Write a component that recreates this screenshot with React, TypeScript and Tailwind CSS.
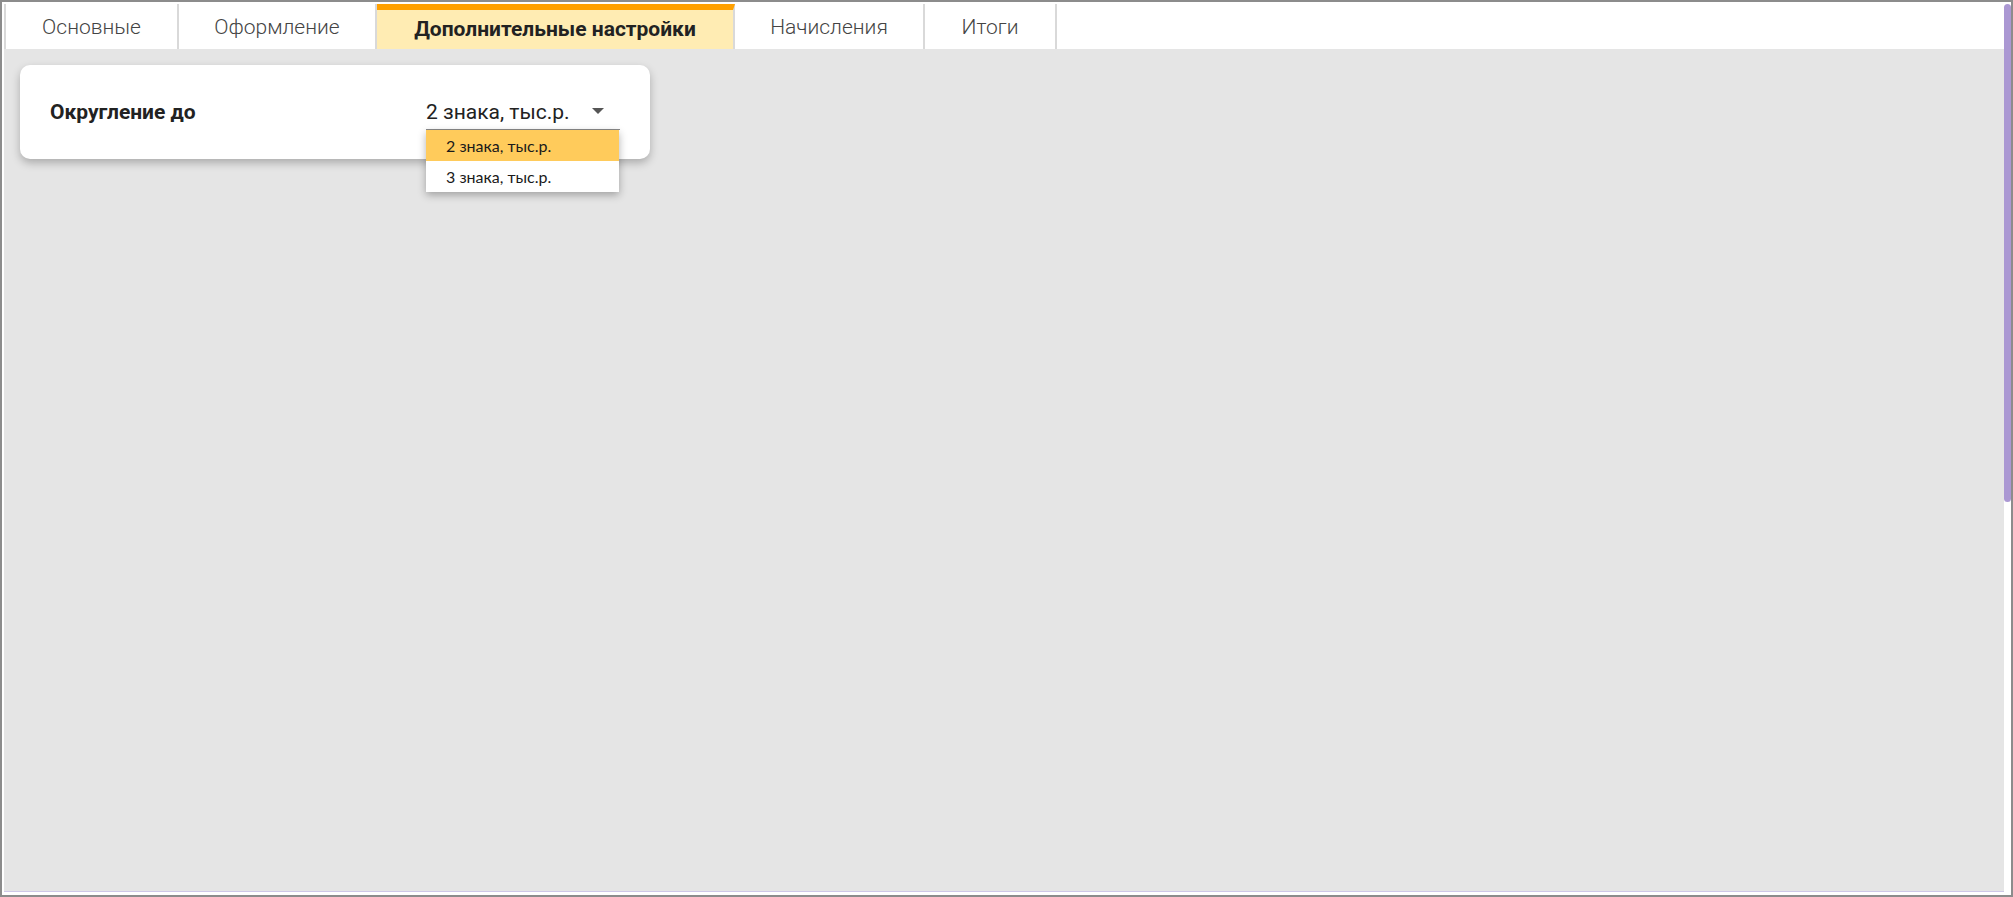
const tabs = [
    { label: "Основные", w: "w-[173px]" },
    { label: "Оформление", w: "w-[198px]" },
    { label: "Дополнительные настройки", w: "w-[358px]", active: true },
    { label: "Начисления", w: "w-[190px]" },
    { label: "Итоги", w: "w-[132px]" },
]

const options = ["2 знака, тыс.р.", "3 знака, тыс.р."]

export default function App() {
    return (
        <div className="w-[2013px] h-[897px] bg-white border-2 border-[#8c8c8c] pl-[2px] pt-[2px] pb-[3px] flex font-['Roboto',sans-serif]">
            {/* Main column */}
            <div className="w-[2000px] h-full flex flex-col">
                {/* Tab bar */}
                <div className="h-[45px] shrink-0 flex bg-white border-l-2 border-[#d9d9d9]">
                    {tabs.map((t) =>
                        t.active ? (
                            <div
                                key={t.label}
                                className={`${t.w} h-full flex items-center justify-center pt-px bg-[#ffecb3] border-t-[6px] border-t-[#ffa000] border-r-2 border-r-[#d9d9d9] text-[21px] font-bold text-[#222]`}
                            >
                                {t.label}
                            </div>
                        ) : (
                            <div
                                key={t.label}
                                className={`${t.w} h-full flex items-center justify-center pt-[2px] border-r-2 border-[#d9d9d9] text-[21px] font-light text-[#444]`}
                            >
                                {t.label}
                            </div>
                        )
                    )}
                </div>

                {/* Content */}
                <div className="flex-1 bg-[#e5e5e5] pl-[16px] pt-[16px]">
                    <div className="w-[630px] h-[94px] bg-white rounded-[10px] shadow-[0_4px_8px_rgba(0,0,0,0.25)] flex items-center pl-[30px]">
                        <div className="w-[376px] pt-px text-[21px] font-bold text-[#222]">Округление до</div>

                        {/* Select */}
                        <div className="relative w-[194px] h-[36px] border-b border-[#8a8a8a] flex items-center pt-[2px]">
                            <span className="text-[21px] text-[#222] leading-none">2 знака, тыс.р.</span>
                            <svg className="absolute right-[16px] top-[14px]" width="12" height="6" viewBox="0 0 12 6">
                                <path d="M0 0 L12 0 L6 6 Z" fill="#555" />
                            </svg>

                            {/* Dropdown */}
                            <div className="absolute left-0 top-[36px] w-[193px] bg-white shadow-[0_3px_8px_rgba(0,0,0,0.3)] z-10 font-['Lato',sans-serif]">
                                {options.map((o, i) => (
                                    <div
                                        key={o}
                                        className={`h-[31px] flex items-center pl-[20px] text-[16px] text-[#1a1a1a] ${i === 0 ? "bg-[#ffcb5b]" : "bg-white"}`}
                                    >
                                        {o}
                                    </div>
                                ))}
                            </div>
                        </div>
                    </div>
                </div>

                {/* Horizontal scrollbar line */}
                <div className="h-px shrink-0 bg-[#cfc8e8]" />
            </div>

            {/* Vertical scrollbar */}
            <div className="w-[7px] h-full">
                <div className="w-full h-[498px] bg-[#ab98d3] rounded-full" />
            </div>
        </div>
    )
}
